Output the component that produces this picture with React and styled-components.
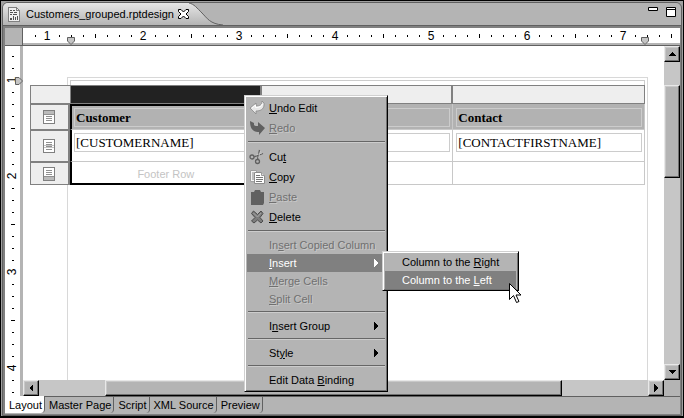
import React from "react";
import styled, { createGlobalStyle, css } from "styled-components";

const ui = `"Liberation Sans", Arial, sans-serif`;
const serif = `"Liberation Serif", "Times New Roman", serif`;

const GlobalStyle = createGlobalStyle`
  *, *::before, *::after { box-sizing: border-box; }
  body { margin: 0; background: #000; font: 11px/16px ${ui}; color: #000; }
  button { font: inherit; color: inherit; margin: 0; padding: 0; border: 0; background: none; text-align: left; }
  svg { display: block; flex: none; }
`;

const Frame = styled.div`
  position: relative;
  height: 100vh;
  overflow: hidden;
  background: #a0a0a0;
  border: 1px solid #000;
  border-bottom-width: 2px;
  padding: 1px 1px 0;
`;

const Editor = styled.main`
  display: flex;
  flex-direction: column;
  height: 100%;
  overflow: hidden;
  border: 1px solid #606060;
  border-radius: 6px 6px 0 0;
  background: #808080;
`;

const TitleBar = styled.header`
  display: flex;
  flex: none;
  height: 23px;
  background: #b4b4b4;
  border-bottom: 1px solid #606060;
`;

const EditorTab = styled.div`
  display: flex;
  align-items: center;
  gap: 4px;
  height: 22px;
  padding-left: 5px;
  background: linear-gradient(#e6e6e6, #b4b4b4);
`;

const FileName = styled.h1`
  margin: 0 0 0 2px;
  font-size: 11px;
  font-weight: 400;
`;

const IconButton = styled.button`
  display: flex;
`;

const WindowControls = styled.div`
  display: flex;
  align-items: flex-start;
  gap: 8px;
  margin-left: auto;
  padding: 4px 5px 0 0;
`;

const Body = styled.div`
  display: flex;
  flex-direction: column;
  flex: 1;
  min-height: 0;
  padding: 2px 1px 1px 2px;
`;

const RulerRow = styled.div`
  display: flex;
  flex: none;
  height: 18px;
  border-bottom: 1px solid #606060;
`;

const RulerCorner = styled.div`
  width: 18px;
  flex: none;
  background: #b4b4b4;
  border-right: 1px solid #606060;
`;

const Ruler = styled.div`
  position: relative;
  flex: ${(p) => (p.$vertical ? "none" : "1")};
  min-width: 0;
  background: #fff;
  ${(p) =>
    p.$vertical
      ? css`width: 18px; padding-top: 4px; border-right: 3px solid #b4b4b4;`
      : css`padding-left: 6px; border-bottom: 2px solid #b4b4b4;`}
`;

const Scale = styled.div`
  display: flex;
  flex-direction: ${(p) => (p.$vertical ? "column" : "row")};
  height: 100%;
  overflow: hidden;
`;

const Mark = styled.span`
  display: flex;
  flex: none;
  align-items: center;
  justify-content: center;
  width: ${(p) => (p.$vertical ? "100%" : "12px")};
  height: ${(p) => (p.$vertical ? "12px" : "100%")};
  font-size: 12px;
`;

const MarkLabel = styled.span`
  line-height: 12px;
  ${(p) => p.$vertical && css`transform: rotate(-90deg);`}
`;

const Tick = styled.i`
  width: ${(p) => (p.$vertical ? (p.$long ? 4 : 2) : 1)}px;
  height: ${(p) => (p.$vertical ? 1 : p.$long ? 4 : 2)}px;
  background: #000;
`;

const MarginHandle = styled.span`
  position: absolute;
  ${(p) => p.$side === "left" && css`left: 44px; bottom: -2px;`}
  ${(p) => p.$side === "right" && css`right: 31px; bottom: -2px;`}
  ${(p) => p.$side === "top" && css`left: 10px; top: 31px;`}
`;

const Workspace = styled.div`
  display: flex;
  flex: 1;
  min-height: 0;
`;

const Viewport = styled.div`
  display: grid;
  flex: 1;
  min-width: 0;
  grid-template: minmax(0, 1fr) 16px / minmax(0, 1fr) 16px;
  background: #b4b4b4;
`;

const Canvas = styled.section`
  overflow: hidden;
  background: #fff;
  padding: 31px 16px 0 7px;
`;

const Page = styled.div`
  display: grid;
  grid-template-columns: 37px minmax(0, 1fr);
  height: 100%;
`;

const Sheet = styled.div`
  grid-area: 1 / 2;
  border: 1px solid #d8d8d8;
  border-bottom: 0;
  padding: 2px 2px 0;
`;

const MarginLine = styled.div`
  height: 20px;
  border: 1px solid #ccc;
  border-bottom: 0;
`;

const Report = styled.table`
  grid-area: 1 / 1 / 2 / 3;
  align-self: start;
  margin-top: 8px;
  width: calc(100% - 3px);
  table-layout: fixed;
  border-collapse: separate;
  border-spacing: 0;
`;

const ColumnHandle = styled.th`
  height: 19px;
  padding: 0;
  border: 1px solid #808080;
  border-left-width: ${(p) => (p.$first ? 1 : 0)}px;
  background: ${(p) => (p.$selected ? "#222" : "#eee")};
  ${(p) => p.$corner && css`width: 40px; border-right: 0;`}
  ${(p) => p.$split && css`border-right-width: 2px;`}
`;

const RowHandle = styled.th`
  padding: 0 2px 0 0;
  height: ${(p) => p.$height}px;
  background: #eee;
  border: solid #808080;
  border-width: 1px 2px 1px 1px;
  svg { margin: 0 auto; }
`;

const Cell = styled.td`
  height: ${(p) => p.$height}px;
  padding: ${(p) => (p.$header ? 4 : 3)}px 2px 0 3px;
  vertical-align: top;
  background: ${(p) => (p.$header ? "#b2b2b2" : "#fff")};
  border: solid #c8c8c8;
  border-width: 0 1px 1px 0;
  font: ${(p) => (p.$header ? 700 : 400)} 13px/17px ${serif};
  white-space: nowrap;
  ${(p) =>
    p.$selected &&
    css`
      border-left: 2px solid #000;
      padding-left: 2px;
      border-right: 2px solid #000;
    `}
  ${(p) => p.$selected && p.$header && css`border-top: 2px solid #000; padding-top: 2px;`}
  ${(p) => p.$selected && p.$last && css`border-bottom: 2px solid #000;`}
`;

const Field = styled.div`
  height: 19px;
  padding-left: 1px;
  border: 1px solid #ccc;
`;

const Hint = styled.div`
  padding-top: 1px;
  font: 11px/16px ${ui};
  color: #c4c4c4;
  text-align: center;
`;

const raised = css`
  background: #b4b4b4;
  border: 1px solid;
  border-color: #e8e8e8 #000 #000 #e8e8e8;
  box-shadow: inset -1px -1px #707070, inset 1px 1px #c8c8c8;
`;

const ScrollBar = styled.div`
  display: flex;
  flex-direction: ${(p) => (p.$vertical ? "column" : "row")};
  background: #c6c6c6;
`;

const ScrollButton = styled.button`
  ${raised}
  display: flex;
  flex: none;
  align-items: center;
  justify-content: center;
  width: 16px;
  height: 16px;
`;

const Track = styled.div`
  flex: ${(p) => p.$share} 0 0;
`;

const Thumb = styled.div`
  ${raised}
  flex: ${(p) => p.$share} 0 0;
`;

const PageTabs = styled.nav`
  display: flex;
  flex: none;
  height: 18px;
  background: #b4b4b4;
  box-shadow: inset 0 1px #606060;
`;

const PageTab = styled.button`
  height: 17px;
  padding: 1px 2px 0 4px;
  border-right: 1px solid #606060;
  border-bottom-right-radius: 4px;
  white-space: nowrap;
  ${(p) => p.$active && css`background: #fff;`}
`;

const MenuPanel = styled.div`
  position: absolute;
  left: ${(p) => p.$left}px;
  top: ${(p) => p.$top}px;
  width: ${(p) => p.$width}px;
  padding: ${(p) => p.$pad}px 2px;
  background: #b4b4b4;
  border: 1px solid;
  border-color: #d0d0d0 #000 #000 #d0d0d0;
  box-shadow: inset 1px 1px #fff, inset -1px -1px #707070;
`;

const Item = styled.button`
  display: flex;
  align-items: center;
  width: 100%;
  height: ${(p) => (p.$tall ? 20 : 18)}px;
  padding: 0 5px 0 ${(p) => p.$indent}px;
  white-space: nowrap;
  background: ${(p) => (p.$active ? "#808080" : "transparent")};
  color: ${(p) => (p.$active ? "#fff" : "#000")};
  &:disabled { color: #707070; text-shadow: 1px 1px #c8c8c8; }
  u { text-underline-offset: 1px; }
`;

const ItemIcon = styled.span`
  width: 16px;
  margin-right: 4px;
`;

const ItemArrow = styled.span`
  margin-left: auto;
`;

const Separator = styled.hr`
  height: 2px;
  margin: 3px 0 4px 1px;
  border: 0;
  border-top: 1px solid #666;
  border-bottom: 1px solid #ccc;
`;

const Pointer = styled.div`
  position: absolute;
  left: 508px;
  top: 282px;
`;

const Arrow = ({ dir }) => {
  const paths = {
    up: "M4 2L8 6H0Z",
    down: "M0 2H8L4 6Z",
    left: "M2 4L6 0V8Z",
    right: "M2 0L6 4L2 8Z",
  };
  return (
    <svg width="8" height="8" viewBox="0 0 8 8" fill="currentColor" shapeRendering="crispEdges">
      <path d={paths[dir]} />
    </svg>
  );
};

const FileIcon = () => (
  <svg width="12" height="15" viewBox="0 0 12 15" shapeRendering="crispEdges">
    <path d="M.5.5h8l3 3v11H.5z" fill="#eee" stroke="#808080" />
    <path d="M8.500.5v3h3" fill="none" stroke="#808080" />
    <path d="M2 3h2v1H2zM5 3h2v1H5zM2 5h3v1H2zM6 5h3v1H6zM2 7h2v1H2zM5 7h4v1H5zM2 11h2v2H2zM5 9h1v4H5zM7 10h1v3H7zM9 9h1v4H9z" fill="#505050" />
  </svg>
);

const CloseIcon = () => (
  <svg width="11" height="10" viewBox="0 0 11 10">
    <path d="M.5.5h2.500L5.500 3 8 .5h2.500v2L8 5l2.500 2.500v2H8L5.500 7 3 9.500H.5v-2L3 5 .5 2.500z" fill="#fff" stroke="#000" />
  </svg>
);

const BandIcon = ({ kind }) => (
  <svg width="12" height="14" viewBox="0 0 12 14" shapeRendering="crispEdges">
    <path d="M.5.5h11v13H.5z" fill="#fff" />
    <path
      d={
        kind === "header"
          ? "M1 4h10v1H1zM3 6h6v1H3zM3 8h6v1H3zM3 10h6v1H3z"
          : kind === "footer"
            ? "M3 3h6v1H3zM3 5h6v1H3zM3 7h6v1H3zM1 9h10v1H1z"
            : "M3 3h6v1H3zM3 5h6v1H3zM3 7h6v1H3zM3 10h6v1H3z"
      }
      fill="#909090"
    />
    {kind === "header" && <path d="M1 1h10v3H1z" fill="#bbb" />}
    {kind === "detail" && <path d="M1 6h10v1H1zM1 8h10v1H1z" fill="#c4c4c4" />}
    {kind === "footer" && <path d="M1 10h10v3H1z" fill="#bbb" />}
    <path d="M.5.5h11v13H.5z" fill="none" stroke="#808080" />
  </svg>
);

const icons = {
  undo: (
    <>
      <path d="M1 8l6-5v3c3.500 0 6-1 6-5l2 2c.5 5-2 8-8 8v3z" fill="#e8e8e8" stroke="#888" strokeWidth=".8" />
      <path d="M3 8l3.500-3v2.500c4 0 6-1 7-3.500" fill="none" stroke="#fff" />
    </>
  ),
  redo: <path d="M1 1l4 2v2c1 1 2 1 4 1V2l7 6-6 7v-3C4 12 1 9 1 1z" fill="#606060" />,
  cut: (
    <g fill="none" stroke="#606060" strokeWidth="1.300">
      <path d="M10.500 1L8.500 10.500M5 8l9-3.500" />
      <path d="M11.500 2L9.500 9M7 6l6-2" stroke="#ccc" strokeWidth=".7" />
      <circle cx="3" cy="8" r="2" />
      <circle cx="8.500" cy="12.500" r="2" />
    </g>
  ),
  copy: (
    <>
      <path d="M1.500 1.500h6v11h-6z" fill="#f4f4f4" stroke="#a0a0a0" />
      <path d="M3 4h2M3 6h2M3 8h2M3 10h2" stroke="#888" />
      <path d="M5.500 3.500h7l3 3v8h-10z" fill="#fff" stroke="#8c8c8c" />
      <path d="M7 6.500h4M7 8.500h7M7 10.500h7M7 12.500h6" stroke="#777" />
      <path d="M12.500 3.500v3h3" fill="#ddd" stroke="#999" />
    </>
  ),
  paste: <path d="M2 3h3l1-2h5l1 2h3v11l-1 2H2z" fill="#606060" />,
  del: (
    <>
      <path d="M2.500 4.500l2-2.500 4 3.500L12 2l2 2.500L11 8.500l3 3.500-2 2-3.500-3L5 14l-2.500-2L6 8.500z" fill="#7c7c7c" stroke="#4c4c4c" />
      <path d="M4.500 4l4 4 3.500-4" fill="none" stroke="#a4a4a4" />
    </>
  ),
};

const HandleShape = ({ side }) => (
  <svg width="8" height="8" viewBox="0 0 8 8">
    <path d={side ? "M.5.5h3.500L7.500 4 4 7.500H.5z" : "M.5.5h7V4L4 7.500.5 4z"} fill="#c4c4c4" stroke="#606060" />
  </svg>
);

const Marks = ({ count, first, vertical }) => (
  <Scale $vertical={vertical}>
    {Array.from({ length: count }, (_, i) => i + first).map((n) => (
      <Mark key={n} $vertical={vertical}>
        {n % 8 === 0 ? (
          <MarkLabel $vertical={vertical}>{n / 8}</MarkLabel>
        ) : (
          <Tick $vertical={vertical} $long={n % 4 === 0} />
        )}
      </Mark>
    ))}
  </Scale>
);

const mnemonic = (text) => {
  const at = text.indexOf("&");
  if (at < 0) return text;
  return (
    <span>
      {text.slice(0, at)}
      <u>{text[at + 1]}</u>
      {text.slice(at + 2)}
    </span>
  );
};

const menuItems = [
  { label: "&Undo Edit", icon: "undo" },
  { label: "&Redo", icon: "redo", disabled: true },
  null,
  { label: "Cu&t", icon: "cut" },
  { label: "&Copy", icon: "copy" },
  { label: "&Paste", icon: "paste", disabled: true },
  { label: "&Delete", icon: "del" },
  null,
  { label: "In&sert Copied Column", disabled: true },
  { label: "&Insert", active: true, sub: true },
  { label: "&Merge Cells", disabled: true },
  { label: "&Split Cell", disabled: true },
  null,
  { label: "I&nsert Group", sub: true },
  null,
  { label: "St&yle", sub: true },
  null,
  { label: "Edit Data &Binding" },
];

const MenuItem = ({ item, indent }) => (
  <Item role="menuitem" disabled={item.disabled} $active={item.active} $tall={!!item.icon} $indent={item.icon ? 2 : indent}>
    {item.icon && (
      <ItemIcon>
        <svg width="16" height="16" viewBox="0 0 16 16">{icons[item.icon]}</svg>
      </ItemIcon>
    )}
    {mnemonic(item.label)}
    {item.sub && <ItemArrow><Arrow dir="right" /></ItemArrow>}
  </Item>
);

const tabs = ["Layout", "Master Page", "Script", "XML Source", "Preview"];

export default function App() {
  return (
    <Frame>
      <GlobalStyle />
      <Editor>
        <TitleBar>
          <EditorTab>
            <FileIcon />
            <FileName>Customers_grouped.rptdesign</FileName>
            <IconButton aria-label="Close"><CloseIcon /></IconButton>
          </EditorTab>
          <svg width="34" height="22" viewBox="0 0 34 22">
            <defs>
              <linearGradient id="tabFill" x1="0" y1="0" x2="0" y2="1">
                <stop offset="0" stopColor="#e6e6e6" />
                <stop offset="1" stopColor="#b4b4b4" />
              </linearGradient>
            </defs>
            <path d="M0 0C5 1 8 5 13 10S21 21 34 22H0z" fill="url(#tabFill)" />
            <path d="M0 0C5 1 8 5 13 10S21 21 34 22" fill="none" stroke="#606060" />
          </svg>
          <WindowControls>
            <IconButton aria-label="Minimize">
              <svg width="10" height="4" viewBox="0 0 10 4"><path d="M.5.5h9v3h-9z" fill="#fff" stroke="#000" /></svg>
            </IconButton>
            <IconButton aria-label="Maximize">
              <svg width="10" height="10" viewBox="0 0 10 10"><path d="M.5.5h9v9h-9zM.5 2.500h9" fill="#fff" stroke="#000" /></svg>
            </IconButton>
          </WindowControls>
        </TitleBar>
        <Body>
          <RulerRow>
            <RulerCorner />
            <Ruler>
              <Marks count={54} first={7} />
              <MarginHandle $side="left"><HandleShape /></MarginHandle>
              <MarginHandle $side="right"><HandleShape /></MarginHandle>
            </Ruler>
          </RulerRow>
          <Workspace>
            <Ruler $vertical>
              <Marks count={29} first={6} vertical />
              <MarginHandle $side="top"><HandleShape side /></MarginHandle>
            </Ruler>
            <Viewport>
              <Canvas>
                <Page>
                  <Sheet><MarginLine /></Sheet>
                  <Report>
                    <thead>
                      <tr>
                        <ColumnHandle $first $corner />
                        <ColumnHandle $first $selected $split />
                        <ColumnHandle $split />
                        <ColumnHandle />
                      </tr>
                    </thead>
                    <tbody>
                      <tr>
                        <RowHandle $height={26}><BandIcon kind="header" /></RowHandle>
                        <Cell $header $selected><Field>Customer</Field></Cell>
                        <Cell $header><Field /></Cell>
                        <Cell $header><Field>Contact</Field></Cell>
                      </tr>
                      <tr>
                        <RowHandle $height={32}><BandIcon kind="detail" /></RowHandle>
                        <Cell $selected><Field>[CUSTOMERNAME]</Field></Cell>
                        <Cell><Field /></Cell>
                        <Cell><Field>[CONTACTFIRSTNAME]</Field></Cell>
                      </tr>
                      <tr>
                        <RowHandle $height={23}><BandIcon kind="footer" /></RowHandle>
                        <Cell $selected $last><Hint>Footer Row</Hint></Cell>
                        <Cell />
                        <Cell />
                      </tr>
                    </tbody>
                  </Report>
                </Page>
              </Canvas>
              <ScrollBar $vertical>
                <ScrollButton aria-label="Scroll up"><Arrow dir="up" /></ScrollButton>
                <Track $share={23} />
                <Thumb $share={92} />
                <Track $share={187} />
                <ScrollButton aria-label="Scroll down"><Arrow dir="down" /></ScrollButton>
              </ScrollBar>
              <ScrollBar>
                <ScrollButton aria-label="Scroll left"><Arrow dir="left" /></ScrollButton>
                <Track $share={66} />
                <Thumb $share={457} />
                <Track $share={86} />
                <ScrollButton aria-label="Scroll right"><Arrow dir="right" /></ScrollButton>
              </ScrollBar>
            </Viewport>
          </Workspace>
          <PageTabs>
            {tabs.map((t, i) => <PageTab key={t} $active={i === 0}>{t}</PageTab>)}
          </PageTabs>
        </Body>
      </Editor>
      <MenuPanel role="menu" $left={243} $top={94} $width={144} $pad={2}>
        {menuItems.map((item, i) => (item ? <MenuItem key={i} item={item} indent={22} /> : <Separator key={i} />))}
      </MenuPanel>
      <MenuPanel role="menu" $left={381} $top={250} $width={137} $pad={1}>
        <MenuItem item={{ label: "Column to the &Right" }} indent={17} />
        <MenuItem item={{ label: "Column to the &Left", active: true }} indent={17} />
      </MenuPanel>
      <Pointer>
        <svg width="13" height="21" viewBox="0 0 13 21">
          <path d="M.5.5v16l4-4 3 7 2.500-1-3-6.500h5z" fill="#fff" stroke="#000" />
        </svg>
      </Pointer>
    </Frame>
  );
}
